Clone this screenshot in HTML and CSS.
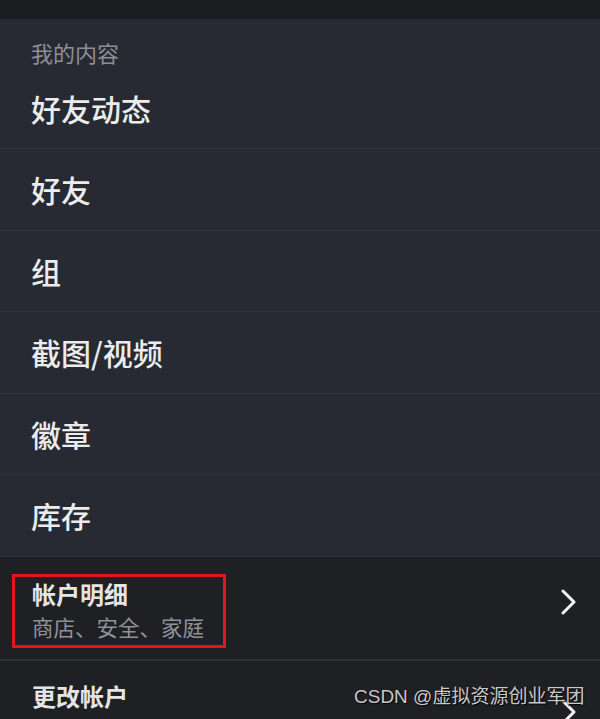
FILE: index.html
```html
<!DOCTYPE html>
<html lang="zh-CN">
<head>
<meta charset="utf-8">
<link rel="stylesheet" href="styles.css">
</head>
<body>
<div class="topbar"></div>
<section class="panel">
  <div class="section-title">我的内容</div>
  <div class="item first">好友动态</div>
  <div class="item">好友</div>
  <div class="item">组</div>
  <div class="item">截图/视频</div>
  <div class="item">徽章</div>
  <div class="item">库存</div>
</section>
<section class="account">
  <div class="acc-row">
    <div class="highlight">
      <div class="acc-title">帐户明细</div>
      <div class="acc-sub">商店、安全、家庭</div>
    </div>
    <svg class="chev" width="16" height="26" viewBox="0 0 16 26"><path d="M2 2 L13 13 L2 24" fill="none" stroke="#f2f2f2" stroke-width="3" stroke-linecap="round" stroke-linejoin="round"/></svg>
  </div>
  <div class="acc-row2">
    <div class="acc-title">更改帐户</div>
    <svg class="chev2" width="16" height="26" viewBox="0 0 16 26"><path d="M2 2 L13 13 L2 24" fill="none" stroke="#f2f2f2" stroke-width="3" stroke-linecap="round" stroke-linejoin="round"/></svg>
  </div>
</section>
<div class="watermark">CSDN @虚拟资源创业军团</div>
</body>
</html>
```
FILE: styles.css
```css
html, body {
  margin: 0;
  padding: 0;
  height: 719px;
  overflow: hidden;
  background: #1f2024;
  font-family: "Noto Sans CJK SC", "Noto Sans", sans-serif;
}
body { position: relative; }
.topbar {
  height: 19px;
  background: #1c1d21;
}
.panel {
  background: #272a32;
}
.section-title {
  height: 49px;
  box-sizing: border-box;
  padding: 21px 0 0 31px;
  font-size: 22px;
  line-height: 25px;
  color: #8c8f95;
}
.item {
  height: 81.5px;
  box-sizing: border-box;
  border-bottom: 1px solid #30333a;
  display: flex;
  align-items: center;
  padding-left: 31px;
  font-size: 30px;
  font-weight: 500;
  color: #ececec;
}
.item.first {
  height: 81px;
}
.account {
  background: #1f2024;
}
.acc-row {
  height: 104px;
  box-sizing: border-box;
  border-bottom: 2px solid #2d2f35;
  display: flex;
  align-items: flex-start;
  justify-content: space-between;
  padding: 17px 23px 0 12px;
}
.highlight {
  border: 3px solid #e3141b;
  padding: 2px 15px 4px 17px;
  width: 176px;
}
.acc-title {
  font-size: 24px;
  font-weight: 700;
  line-height: 30px;
  color: #e4e4e4;
}
.acc-sub {
  margin-top: 4px;
  font-size: 21.5px;
  line-height: 28px;
  color: #8e9197;
}
.chev {
  margin-top: 15px;
}
.acc-row2 {
  display: flex;
  justify-content: space-between;
  align-items: flex-start;
  padding: 20px 23px 0 32px;
}
.chev2 {
  margin-top: 18px;
}
.watermark {
  position: absolute;
  left: 354px;
  top: 684px;
  font-family: "Liberation Sans", "Noto Sans CJK SC", sans-serif;
  font-size: 19px;
  line-height: 26px;
  color: #c8c8c8;
  text-shadow: 1px 1px 1px #000;
  white-space: nowrap;
}
```
